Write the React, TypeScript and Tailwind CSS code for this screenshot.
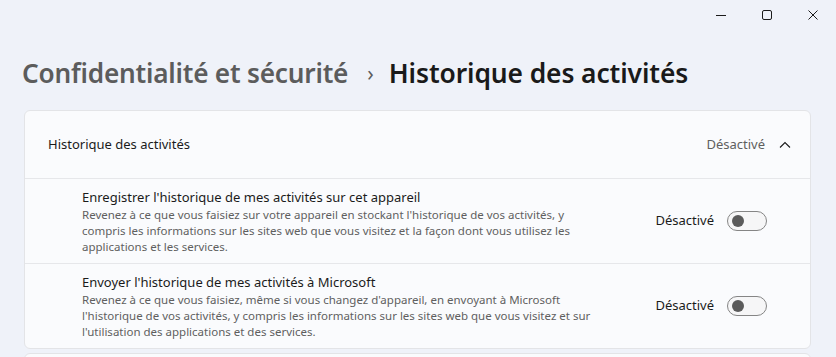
import React from "react";

const font = { fontFamily: '"Segoe UI", "Noto Sans", "Open Sans", sans-serif' };

function Toggle() {
  return (
    <div className="flex h-[20px] w-[40px] items-center rounded-full border border-[#858585] bg-[#f6f6f7] pl-[4px]">
      <div className="h-[12px] w-[12px] rounded-full bg-[#5b5b5b]" />
    </div>
  );
}

function Row({ title, lines }: { title: string; lines: string[] }) {
  return (
    <div className="flex h-[85px] items-center border-t border-[#e6e7ea] pl-[57px] pr-[43px]">
      <div className="flex-1 pt-[1px]">
        <div className="text-[13px] leading-[19px] text-[#1b1b1b]">{title}</div>
        {lines.map((l) => (
          <div key={l} className="whitespace-nowrap text-[11.5px] leading-[16px] text-[#5f5f5f]">
            {l}
          </div>
        ))}
      </div>
      <div className="flex items-center gap-[13px]">
        <span className="text-[13px] text-[#1b1b1b]">Désactivé</span>
        <Toggle />
      </div>
    </div>
  );
}

export default function App() {
  return (
    <div className="h-[357px] w-[836px] overflow-hidden bg-[#eff2f9]" style={font}>
      {/* barre de titre */}
      <div className="flex h-[30px] items-center justify-end">
        <div className="flex h-[30px] w-[46px] items-center justify-center">
          <svg width="10" height="10" viewBox="0 0 10 10">
            <path d="M0 5.5h10" stroke="#1b1b1b" strokeWidth="1" />
          </svg>
        </div>
        <div className="flex h-[30px] w-[46px] items-center justify-center">
          <svg width="10" height="10" viewBox="0 0 10 10">
            <rect x="0.5" y="0.5" width="9" height="9" rx="1.5" fill="none" stroke="#1b1b1b" strokeWidth="1" />
          </svg>
        </div>
        <div className="flex h-[30px] w-[46px] items-center justify-center">
          <svg width="10" height="10" viewBox="0 0 10 10">
            <path d="M0.5 0.5l9 9M9.5 0.5l-9 9" stroke="#1b1b1b" strokeWidth="1" />
          </svg>
        </div>
      </div>

      {/* fil d'ariane */}
      <div className="flex h-[80px] items-center pl-[22px] pt-[8px]">
        <span className="text-[26.2px] font-semibold tracking-[-0.2px] text-[#5c5c5c]">Confidentialité et sécurité</span>
        <span className="ml-[19px] mr-[15px] text-[21px] text-[#5c5c5c]">›</span>
        <span className="text-[26.4px] font-semibold tracking-[-0.1px] text-[#1a1a1a]">Historique des activités</span>
      </div>

      <div className="mx-[24px] w-[787px]">
        <div className="overflow-hidden rounded-[6px] border border-[#e3e4e7] bg-[#fafbfd]">
          <div className="flex h-[67px] items-center pl-[23px] pr-[18px]">
            <span className="flex-1 text-[13px] text-[#1b1b1b]">Historique des activités</span>
            <span className="text-[13px] text-[#5f5f5f]">Désactivé</span>
            <svg className="ml-[13px]" width="14" height="14" viewBox="0 0 14 14">
              <path d="M2 9.5l5-5 5 5" fill="none" stroke="#1b1b1b" strokeWidth="1.1" />
            </svg>
          </div>
          <Row
            title="Enregistrer l'historique de mes activités sur cet appareil"
            lines={[
              "Revenez à ce que vous faisiez sur votre appareil en stockant l'historique de vos activités, y",
              "compris les informations sur les sites web que vous visitez et la façon dont vous utilisez les",
              "applications et les services.",
            ]}
          />
          <Row
            title="Envoyer l'historique de mes activités à Microsoft"
            lines={[
              "Revenez à ce que vous faisiez, même si vous changez d'appareil, en envoyant à Microsoft",
              "l'historique de vos activités, y compris les informations sur les sites web que vous visitez et sur",
              "l'utilisation des applications et des services.",
            ]}
          />
        </div>
        <div className="mt-[4px] h-[20px] rounded-[6px] border border-[#e3e4e7] bg-[#fafbfd]" />
      </div>
    </div>
  );
}
